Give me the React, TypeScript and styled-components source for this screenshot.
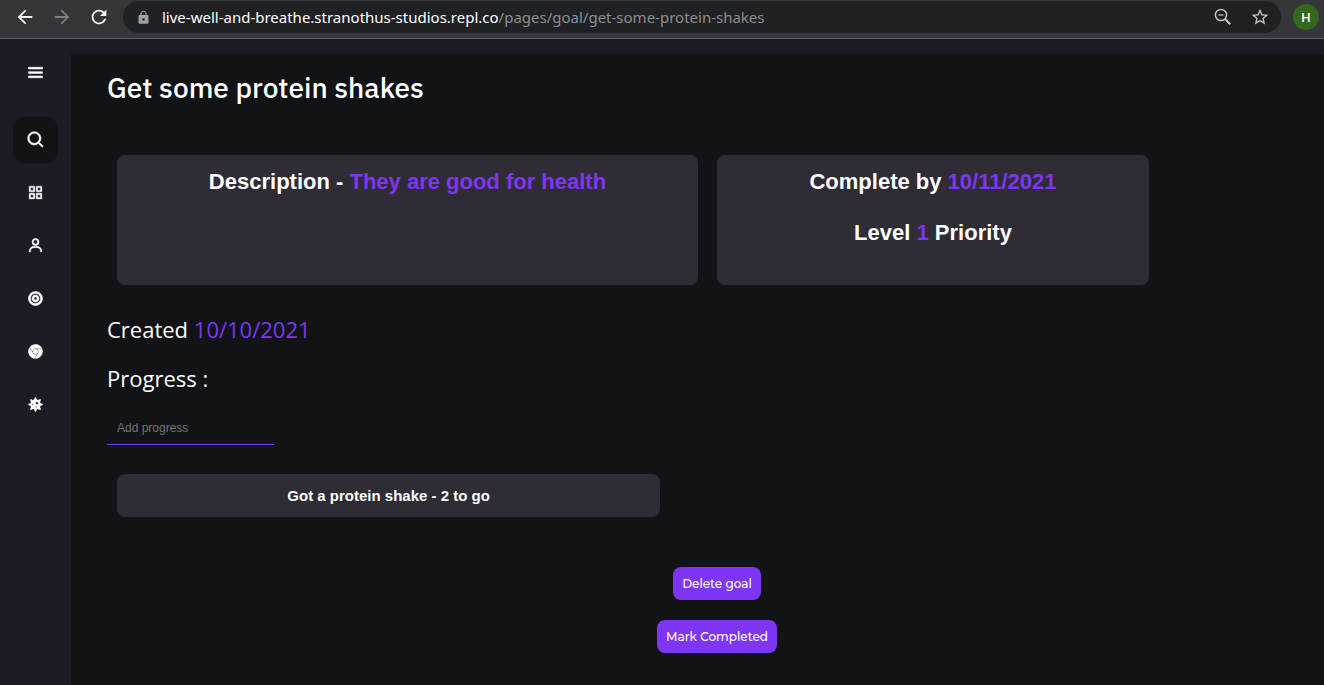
import React from "react";
import styled, { createGlobalStyle } from "styled-components";
import {
  BiMenu,
  BiSearch,
  BiGridAlt,
  BiUser,
  BiSolidBullseye,
  BiLogoChrome,
  BiSolidVirus,
} from "react-icons/bi";
import {
  MdArrowBack,
  MdArrowForward,
  MdRefresh,
  MdLock,
  MdStarBorder,
} from "react-icons/md";

const GlobalStyle = createGlobalStyle`
  * { box-sizing: border-box; }
  body { margin: 0; background: #121316; color: #fff; font-family: "Liberation Sans", Arial, sans-serif; }
  h1, h2, p, ul { margin: 0; padding: 0; }
  button, input { font: inherit; color: inherit; border: 0; background: none; padding: 0; }
`;

const Screen = styled.div`
  display: flex;
  flex-direction: column;
  min-height: 100vh;
`;

const BrowserBar = styled.header`
  display: flex;
  align-items: center;
  height: 39px;
  padding: 0 5px 4px 14px;
  background: #35363a;
  border-bottom: 1px solid #5f6063;
`;

const HistoryButtons = styled.div`
  display: flex;
  gap: 15px;
  margin-right: 13px;
`;

const BarButton = styled.button<{ $dim?: boolean }>`
  display: flex;
  align-items: center;
  color: ${(p) => (p.$dim ? "#7d7e81" : "#f1f3f4")};
  font-size: 22px;
`;

const AddressBar = styled.div`
  display: flex;
  flex: 1;
  align-items: center;
  height: 32px;
  padding: 0 11px 0 13px;
  border-radius: 16px;
  background: #202124;
  color: #9aa0a6;
`;

const Address = styled.p`
  flex: 1;
  margin-left: 11px;
  color: #8c8e91;
  font: 15px/20px "Noto Sans", "Open Sans", sans-serif;
`;

const Host = styled.span`
  color: #fff;
`;

const AddressActions = styled.div`
  display: flex;
  gap: 17px;
  svg { color: #c4c5c8; font-size: 20px; }
`;

const Avatar = styled.button`
  width: 26px;
  height: 26px;
  margin-left: 12px;
  border-radius: 50%;
  background: #33691e;
  font: 600 13px/26px "Open Sans", sans-serif;
`;

const Shell = styled.div`
  display: flex;
  flex: 1;
  padding-top: 15px;
  background: #1a1d24;
`;

const Sidebar = styled.nav`
  display: flex;
  flex: none;
  flex-direction: column;
  align-items: center;
  width: 71px;
  padding-top: 7px;
`;

const NavButton = styled.button<{ $active?: boolean; $size?: number }>`
  display: flex;
  align-items: center;
  justify-content: center;
  width: 45px;
  height: ${(p) => (p.$active ? 46 : 23)}px;
  margin-bottom: ${(p) => (p.$active ? 18 : 30)}px;
  padding-bottom: 1px;
  border-radius: 12px;
  background: ${(p) => (p.$active ? "#121316" : "transparent")};
  font-size: ${(p) => p.$size ?? 17}px;
  svg { stroke: currentColor; stroke-width: 0.6; }
`;

const MenuButton = styled(NavButton)`
  margin-bottom: 33px;
`;

const Main = styled.main`
  flex: 1;
  min-width: 0;
  padding: 12px 0 32px 36px;
  background: #121316;
`;

const Title = styled.h1`
  font: 500 28px/44px "IBM Plex Sans", Roboto, sans-serif;
`;

const Accent = styled.span`
  color: #7e36f4;
`;

const Cards = styled.div`
  display: grid;
  grid-template-columns: 581fr 432fr;
  gap: 19px;
  margin: 45px 175px 20px 10px;
`;

const Card = styled.section`
  display: flex;
  flex-direction: column;
  gap: 25px;
  min-height: 130px;
  padding: 14px 10px;
  border-radius: 8px;
  background: #302c35;
  font-size: 22px;
  font-weight: 700;
  line-height: 26px;
  text-align: center;
`;

const Heading = styled.h2`
  padding: 6px 0 7px;
  font: 500 22px/36px "Open Sans", sans-serif;
`;

const ProgressInput = styled.input`
  display: block;
  width: 167px;
  height: 34px;
  margin-top: 8px;
  padding: 0 10px;
  border: solid #7e36f4;
  border-width: 0 0 1px;
  font-size: 12px;
  outline: 0;
  &::placeholder { color: #757575; opacity: 1; }
`;

const ProgressList = styled.ul`
  margin: 29px 0 50px;
  padding-left: 10px;
  list-style: none;
`;

const ProgressItem = styled.li`
  width: 45%;
  padding: 12px;
  border-radius: 8px;
  background: #302c35;
  font-size: 15px;
  font-weight: 700;
  line-height: 19px;
  text-align: center;
`;

const Actions = styled.div`
  display: flex;
  flex-direction: column;
  align-items: center;
  gap: 20px;
  padding-left: 3px;
`;

const ActionButton = styled.button`
  height: 33px;
  padding: 0 9px;
  border-radius: 8px;
  background: #7e36f4;
  font: 500 12px/33px Montserrat, Inter, sans-serif;
`;

function ZoomOutIcon() {
  return (
    <svg width="1em" height="1em" viewBox="0 0 20 20" fill="none" stroke="currentColor" aria-hidden="true">
      <circle cx="8" cy="8" r="5.6" strokeWidth="1.5" />
      <path d="M5.5 8h5" strokeWidth="1.2" />
      <path d="M12 12l5.2 5.2" strokeWidth="2" />
    </svg>
  );
}

export default function App() {
  return (
    <>
      <GlobalStyle />
      <Screen>
        <BrowserBar>
          <HistoryButtons>
            <BarButton aria-label="Back"><MdArrowBack /></BarButton>
            <BarButton $dim aria-label="Forward"><MdArrowForward /></BarButton>
            <BarButton aria-label="Reload"><MdRefresh /></BarButton>
          </HistoryButtons>
          <AddressBar>
            <MdLock size={15} />
            <Address>
              <Host>live-well-and-breathe.stranothus-studios.repl.co</Host>
              /pages/goal/get-some-protein-shakes
            </Address>
            <AddressActions>
              <BarButton aria-label="Zoom"><ZoomOutIcon /></BarButton>
              <BarButton aria-label="Bookmark"><MdStarBorder /></BarButton>
            </AddressActions>
          </AddressBar>
          <Avatar>H</Avatar>
        </BrowserBar>
        <Shell>
          <Sidebar>
            <MenuButton $size={21} aria-label="Menu"><BiMenu /></MenuButton>
            <NavButton $active $size={20} aria-label="Search"><BiSearch /></NavButton>
            <NavButton aria-label="Dashboard"><BiGridAlt /></NavButton>
            <NavButton aria-label="Profile"><BiUser /></NavButton>
            <NavButton aria-label="Goals"><BiSolidBullseye /></NavButton>
            <NavButton aria-label="Browse"><BiLogoChrome /></NavButton>
            <NavButton aria-label="Health"><BiSolidVirus /></NavButton>
          </Sidebar>
          <Main>
            <Title>Get some protein shakes</Title>
            <Cards>
              <Card>
                <p>Description - <Accent>They are good for health</Accent></p>
              </Card>
              <Card>
                <p>Complete by <Accent>10/11/2021</Accent></p>
                <p>Level <Accent>1</Accent> Priority</p>
              </Card>
            </Cards>
            <Heading>Created <Accent>10/10/2021</Accent></Heading>
            <Heading>Progress :</Heading>
            <ProgressInput aria-label="Add progress" placeholder="Add progress" />
            <ProgressList>
              <ProgressItem>Got a protein shake - 2 to go</ProgressItem>
            </ProgressList>
            <Actions>
              <ActionButton>Delete goal</ActionButton>
              <ActionButton>Mark Completed</ActionButton>
            </Actions>
          </Main>
        </Shell>
      </Screen>
    </>
  );
}
